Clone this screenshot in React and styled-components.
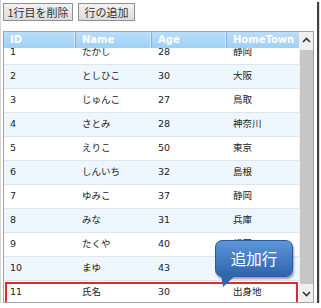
import React from "react";
import styled, { createGlobalStyle } from "styled-components";

const Global = createGlobalStyle`
  html, body { margin: 0; padding: 0; background: #fff; }
  body { font-family: "DejaVu Sans", "Noto Sans CJK JP", sans-serif; }
`;

const Frame = styled.div`
  position: relative;
  box-sizing: border-box;
  width: 317px;
  height: 303px;
  border-left: 1px solid #d4d4d4;
  background: #fff;
  box-shadow: 2px 2px 1px rgba(30, 30, 30, 0.85);
  padding: 3px 0 0 2px;
  display: flex;
  flex-direction: column;
  overflow: hidden;
`;

const Toolbar = styled.div`
  display: flex;
  gap: 5px;
  height: 18px;
`;

const Button = styled.button`
  box-sizing: border-box;
  height: 18px;
  width: ${(p) => p.$w}px;
  padding: 0;
  margin: 0;
  border: 1px solid #8f8f8f;
  background: linear-gradient(#f3f3f3, #dcdcdc);
  color: #333;
  font-family: "Noto Sans CJK JP", sans-serif;
  font-size: 11px;
  line-height: 16px;
  text-align: center;
`;

const Table = styled.div`
  box-sizing: border-box;
  margin-top: 10px;
  width: 311px;
  height: 272px;
  border: 1px solid #a4a4a4;
  display: flex;
`;

const Main = styled.div`
  width: 295px;
  display: flex;
  flex-direction: column;
  overflow: hidden;
`;

const cols = "72px 76px 75px 72px";

const Header = styled.div`
  display: grid;
  grid-template-columns: ${cols};
  height: 16px;
  background: linear-gradient(#b9defa, #9fd0f5);
  flex: none;
  position: relative;
  z-index: 1;
`;

const HeadCell = styled.div`
  box-sizing: border-box;
  padding-left: 6px;
  color: #fff;
  font-weight: bold;
  font-size: 10px;
  line-height: 16px;
  border-right: ${(p) => (p.$last ? "none" : "1px solid #7fb3df")};
  box-shadow: ${(p) => (p.$last ? "none" : "inset -1px 0 0 #d3ebfd")};
  white-space: nowrap;
  overflow: hidden;
`;

const Viewport = styled.div`
  flex: 1;
  overflow: hidden;
  position: relative;
`;

const Rows = styled.div`
  margin-top: -7.5px;
`;

const Row = styled.div`
  box-sizing: border-box;
  display: grid;
  grid-template-columns: ${cols};
  align-items: center;
  height: 24px;
  background: ${(p) => (p.$alt ? "#eef7fe" : "#fff")};
  border-bottom: 1px solid #dce6ee;
  outline: ${(p) => (p.$mark ? "2px solid #e8262a" : "none")};
  outline-offset: -3px;
`;

const Cell = styled.div`
  padding-left: 6px;
  font-size: 9.5px;
  line-height: 8px;
  color: #222;
  white-space: nowrap;
`;

const Scroll = styled.div`
  width: 14px;
  background: #f0f0f0;
  display: flex;
  flex-direction: column;
  align-items: center;
`;

const Arrow = styled.div`
  height: 16px;
  width: 14px;
  display: flex;
  align-items: center;
  justify-content: center;
`;

const Thumb = styled.div`
  flex: 1;
  width: 13px;
  margin: 2px 0;
  background: #c6c6c6;
`;

const Bubble = styled.div`
  position: absolute;
  left: 214px;
  top: 240px;
  width: 78px;
  height: 37px;
  box-sizing: border-box;
  border-radius: 7px;
  background: linear-gradient(#5c97d8, #2f63ad);
  border: 1px solid #2a5a9e;
  box-shadow: 1px 2px 2px rgba(0, 0, 0, 0.35);
  color: #fff;
  font-family: "Noto Sans CJK JP", sans-serif;
  font-size: 15.5px;
  line-height: 35px;
  text-align: center;
  z-index: 5;
`;

const Tail = styled.svg`
  position: absolute;
  left: 4px;
  top: 34px;
  overflow: visible;
`;

const data = [
  ["1", "たかし", "28", "静岡"],
  ["2", "としひこ", "30", "大阪"],
  ["3", "じゅんこ", "27", "鳥取"],
  ["4", "さとみ", "28", "神奈川"],
  ["5", "えりこ", "50", "東京"],
  ["6", "しんいち", "32", "島根"],
  ["7", "ゆみこ", "37", "静岡"],
  ["8", "みな", "31", "兵庫"],
  ["9", "たくや", "40", "福岡"],
  ["10", "まゆ", "43", "京都"],
  ["11", "氏名", "30", "出身地"],
];

export default function App() {
  return (
    <>
      <Global />
      <Frame>
        <Toolbar>
          <Button $w={70}>1行目を削除</Button>
          <Button $w={57}>行の追加</Button>
        </Toolbar>
        <Table>
          <Main>
            <Header>
              <HeadCell>ID</HeadCell>
              <HeadCell>Name</HeadCell>
              <HeadCell>Age</HeadCell>
              <HeadCell $last>HomeTown</HeadCell>
            </Header>
            <Viewport>
              <Rows>
                {data.map((r, i) => (
                  <Row key={r[0]} $alt={i % 2 === 1} $mark={i === 10}>
                    {r.map((c, j) => (
                      <Cell key={j}>{c}</Cell>
                    ))}
                  </Row>
                ))}
              </Rows>
            </Viewport>
          </Main>
          <Scroll>
            <Arrow>
              <svg width="9" height="6" viewBox="0 0 9 6">
                <path d="M1 5 L4.5 1.5 L8 5" fill="none" stroke="#333" strokeWidth="1.6" />
              </svg>
            </Arrow>
            <Thumb />
            <Arrow>
              <svg width="9" height="6" viewBox="0 0 9 6">
                <path d="M1 1 L4.5 4.5 L8 1" fill="none" stroke="#333" strokeWidth="1.6" />
              </svg>
            </Arrow>
          </Scroll>
        </Table>
        <Bubble>
          追加行
          <Tail width="16" height="12">
            <polygon points="1,0 16,0 3,12" fill="#3066b0" />
          </Tail>
        </Bubble>
      </Frame>
    </>
  );
}
